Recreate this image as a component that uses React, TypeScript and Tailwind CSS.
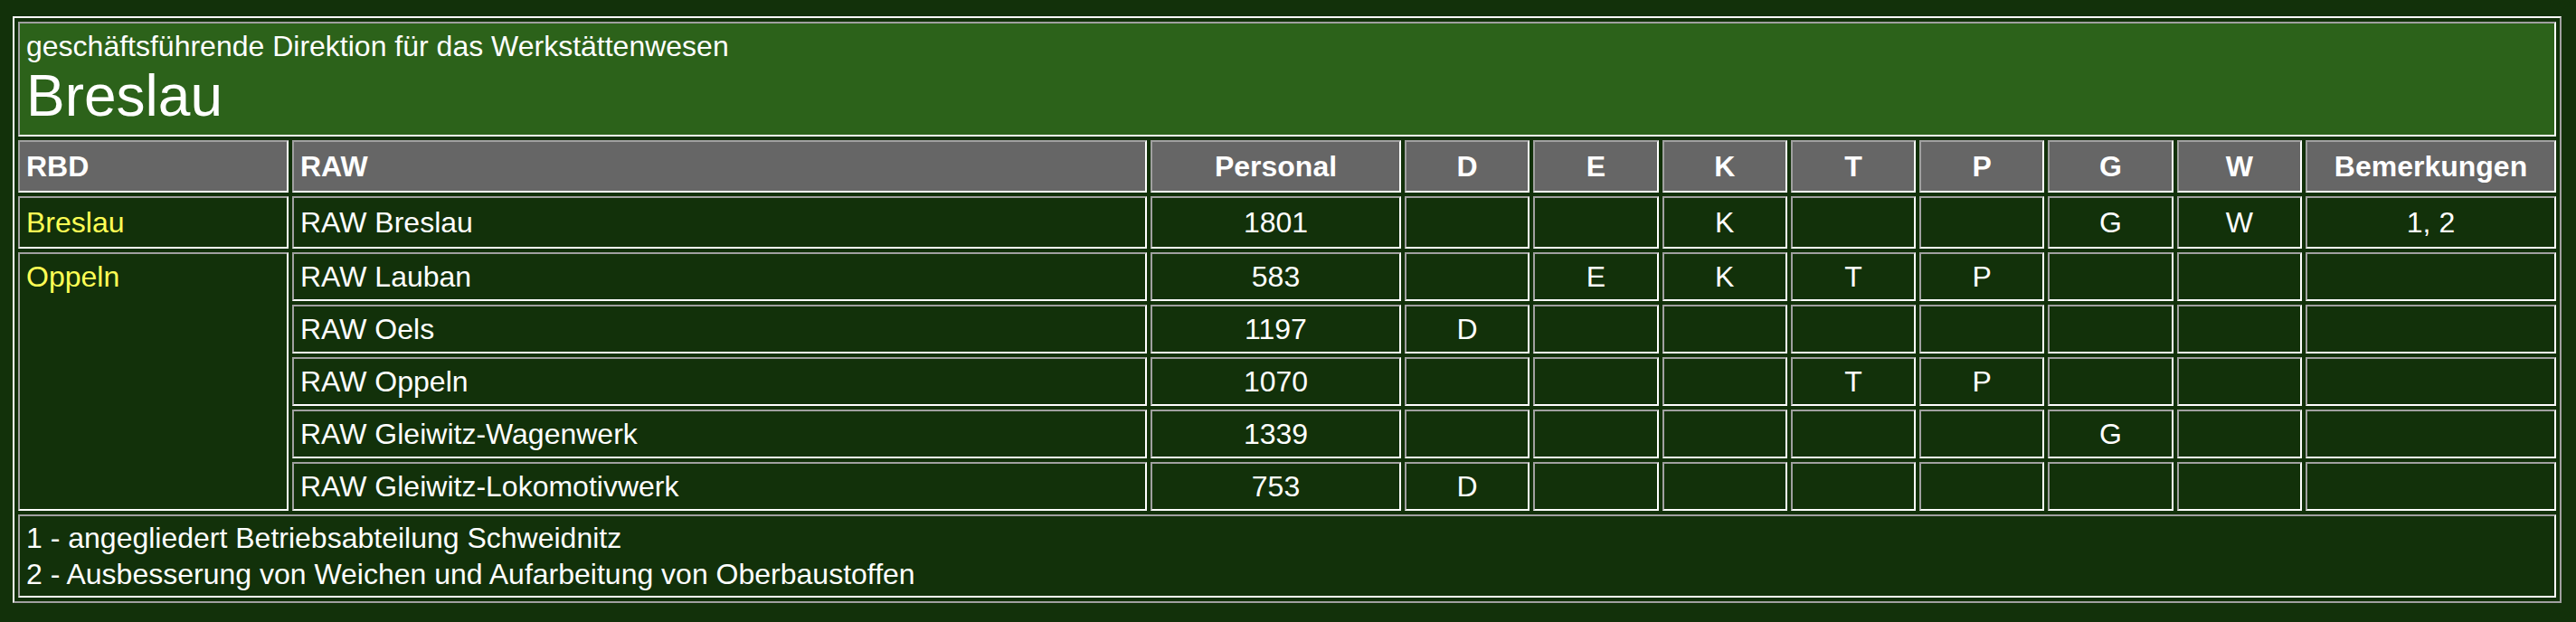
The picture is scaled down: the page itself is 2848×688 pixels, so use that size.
import React from 'react';

type Werk = {
  name: string;
  personal: string;
  marks: string[]; // D E K T P G W
  remark: string;
};

const cellBorder =
  'border-2 border-t-[#a0a0a0] border-l-[#a0a0a0] border-r-white border-b-white px-[7px] py-1';

const oppeln: Werk[] = [
  { name: 'RAW Lauban', personal: '583', marks: ['', 'E', 'K', 'T', 'P', '', ''], remark: '' },
  { name: 'RAW Oels', personal: '1197', marks: ['D', '', '', '', '', '', ''], remark: '' },
  { name: 'RAW Oppeln', personal: '1070', marks: ['', '', '', 'T', 'P', '', ''], remark: '' },
  { name: 'RAW Gleiwitz-Wagenwerk', personal: '1339', marks: ['', '', '', '', '', 'G', ''], remark: '' },
  { name: 'RAW Gleiwitz-Lokomotivwerk', personal: '753', marks: ['D', '', '', '', '', '', ''], remark: '' },
];

const breslau: Werk = {
  name: 'RAW Breslau',
  personal: '1801',
  marks: ['', '', 'K', '', '', 'G', 'W'],
  remark: '1, 2',
};

const columns = ['D', 'E', 'K', 'T', 'P', 'G', 'W'];

const WerkCells: React.FC<{ werk: Werk; tall?: boolean }> = ({ werk, tall }) => {
  const lead = tall ? 'leading-[46px]' : 'leading-[42px]';
  return (
    <>
      <div className={`${cellBorder} ${lead}`}>{werk.name}</div>
      <div className={`${cellBorder} ${lead} text-center`}>{werk.personal}</div>
      {werk.marks.map((m, i) => (
        <div key={i} className={`${cellBorder} ${lead} text-center`}>
          {m}
        </div>
      ))}
      <div className={`${cellBorder} ${lead} text-center`}>{werk.remark}</div>
    </>
  );
};

const App: React.FC = () => {
  return (
    <div className="min-h-[688px] w-full bg-[#12310a] pl-[14px] pt-[18px] font-['Liberation_Sans',Arial,sans-serif] text-[32px] text-white">
      <div className="grid w-[2818px] grid-cols-[299px_945px_277px_repeat(7,1fr)_277px] gap-1 border-2 border-t-white border-l-white border-r-[#a0a0a0] border-b-[#a0a0a0] p-1">
        {/* Titel */}
        <div className={`${cellBorder} col-span-11 h-[127px] bg-[#2c621a]`}>
          <div className="leading-[42px]">geschäftsführende Direktion für das Werkstättenwesen</div>
          <div className="text-[64px] leading-[68px]">Breslau</div>
        </div>

        {/* Kopfzeile */}
        <div className={`${cellBorder} bg-[#666666] font-bold leading-[46px]`}>RBD</div>
        <div className={`${cellBorder} bg-[#666666] font-bold leading-[46px]`}>RAW</div>
        <div className={`${cellBorder} bg-[#666666] text-center font-bold leading-[46px]`}>Personal</div>
        {columns.map((c) => (
          <div key={c} className={`${cellBorder} bg-[#666666] text-center font-bold leading-[46px]`}>
            {c}
          </div>
        ))}
        <div className={`${cellBorder} bg-[#666666] text-center font-bold leading-[46px]`}>Bemerkungen</div>

        {/* RBD Breslau */}
        <div className={`${cellBorder} leading-[46px] text-[#ffff55]`}>Breslau</div>
        <WerkCells werk={breslau} tall />

        {/* RBD Oppeln */}
        <div className={`${cellBorder} row-span-5 leading-[42px] text-[#ffff55]`}>Oppeln</div>
        {oppeln.map((w) => (
          <WerkCells key={w.name} werk={w} />
        ))}

        {/* Fussnoten */}
        <div className={`${cellBorder} col-span-11 leading-[40px]`}>
          <div>1 - angegliedert Betriebsabteilung Schweidnitz</div>
          <div>2 - Ausbesserung von Weichen und Aufarbeitung von Oberbaustoffen</div>
        </div>
      </div>
    </div>
  );
};

export default App;
